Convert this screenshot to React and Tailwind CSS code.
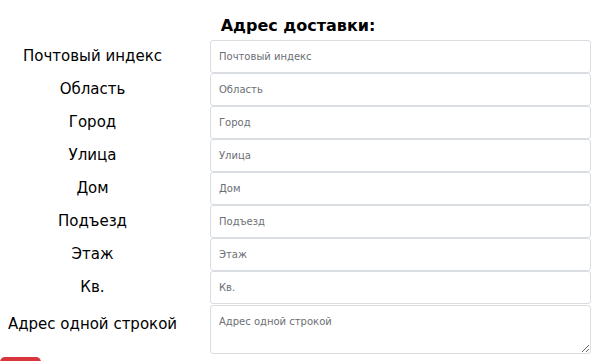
import React from 'react';

const fields = [
  'Почтовый индекс',
  'Область',
  'Город',
  'Улица',
  'Дом',
  'Подъезд',
  'Этаж',
  'Кв.',
];

const App = () => {
  return (
    <div className="w-[610px] h-[361px] overflow-hidden bg-white font-['DejaVu_Sans',sans-serif] text-black">
      <div className="w-[596px]">
        {/* заголовок */}
        <h2 className="pt-[13px] h-[40px] text-center text-[16px] leading-[26px] font-bold">
          Адрес доставки:
        </h2>

        {fields.map((name) => (
          <div key={name} className="flex items-center h-[33px]">
            <div className="w-[185px] text-center text-[15px]">{name}</div>
            <input
              type="text"
              placeholder={name}
              className="ml-[25px] w-[381px] h-[33px] px-[8px] border border-[#dadde2] rounded-[3px] text-[10px] placeholder:text-[#6b6f75] outline-none"
            />
          </div>
        ))}

        <div className="flex items-start mt-[1px]">
          <div className="w-[185px] text-center text-[15px] pt-[8px]">Адрес одной строкой</div>
          <textarea
            placeholder="Адрес одной строкой"
            className="ml-[25px] w-[381px] h-[49px] px-[8px] py-[8px] border border-[#dadde2] rounded-[3px] text-[10px] placeholder:text-[#6b6f75] outline-none"
          />
        </div>

        <div className="mt-[3px] w-[41px] h-[10px] bg-[#d8353d] rounded-t-[5px]" />
      </div>
    </div>
  );
};

export default App;
